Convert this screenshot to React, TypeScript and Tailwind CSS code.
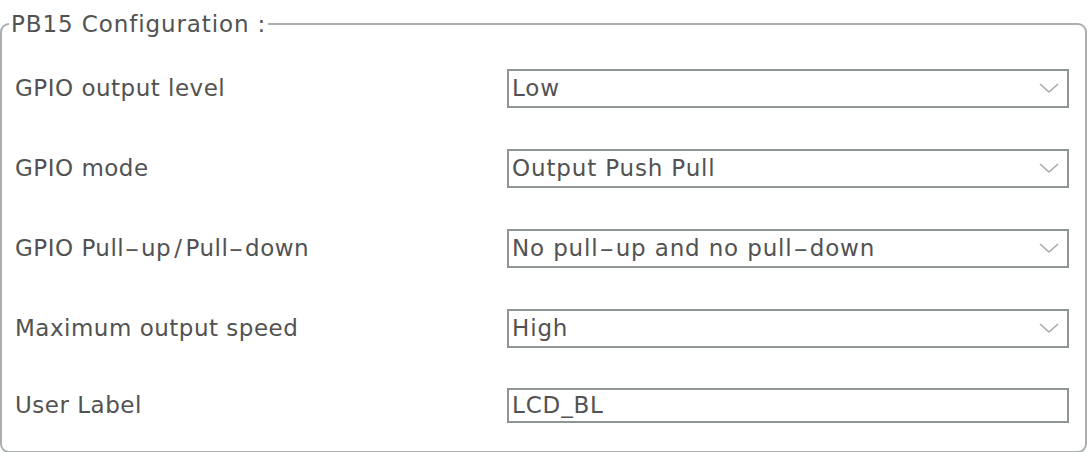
import React from 'react';

interface Row {
  label: string;
  value: string;
  kind: 'select' | 'text';
}

const rows: Row[] = [
  { label: 'GPIO output level', value: 'Low', kind: 'select' },
  { label: 'GPIO mode', value: 'Output Push Pull', kind: 'select' },
  { label: 'GPIO Pull-up/Pull-down', value: 'No pull-up and no pull-down', kind: 'select' },
  { label: 'Maximum output speed', value: 'High', kind: 'select' },
  { label: 'User Label', value: 'LCD_BL', kind: 'text' },
];

// the original UI font draws '-' and '/' much wider than DejaVu, so stretch them a little
const Wide = ({ text }: { text: string }) => (
  <>
    {text.split(/([-/])/).map((part, i) =>
      part === '-' ? (
        <span key={i} className="inline-block mx-[4px] scale-x-[1.8]">{part}</span>
      ) : part === '/' ? (
        <span key={i} className="mx-[3px]">{part}</span>
      ) : (
        <React.Fragment key={i}>{part}</React.Fragment>
      )
    )}
  </>
);

const Chevron = () => (
  <svg width="20" height="10" viewBox="0 0 20 10" className="shrink-0">
    <polyline points="1,1 10,9 19,1" fill="none" stroke="#a3a7aa" strokeWidth="1.4" />
  </svg>
);

const App: React.FC = () => {
  return (
    <div className="w-[1090px] h-[452px] bg-white pt-[10px] font-['DejaVu_Sans',sans-serif] text-[#525252]">
      <fieldset className="w-[1087px] border-2 border-[#abafb2] rounded-[9px] px-0 pb-[8px]">
        <legend className="ml-[7px] px-[2px] leading-[28px] text-[23px] tracking-[0.9px]">PB15 Configuration :</legend>
        <div className="flex flex-col pt-[10px]">
          {rows.map((row, idx) => (
            <div
              key={row.label}
              className={`flex items-center ${idx === rows.length - 1 ? 'h-[75px]' : 'h-[80px]'}`}
            >
              <div className="w-[505px] pl-[13px] text-[23px] tracking-[0.5px]">
                <Wide text={row.label} />
              </div>
              {row.kind === 'select' ? (
                <div className="w-[562px] h-[39px] border-2 border-[#8f9497] flex items-center justify-between pl-[3px] pr-[8px] text-[23px] tracking-[0.85px]">
                  <span><Wide text={row.value} /></span>
                  <Chevron />
                </div>
              ) : (
                <div className="w-[562px] h-[35px] border-2 border-[#8f9497] flex items-center pl-[3px] text-[23px] tracking-[0.85px]">
                  {row.value}
                </div>
              )}
            </div>
          ))}
        </div>
      </fieldset>
    </div>
  );
};

export default App;
